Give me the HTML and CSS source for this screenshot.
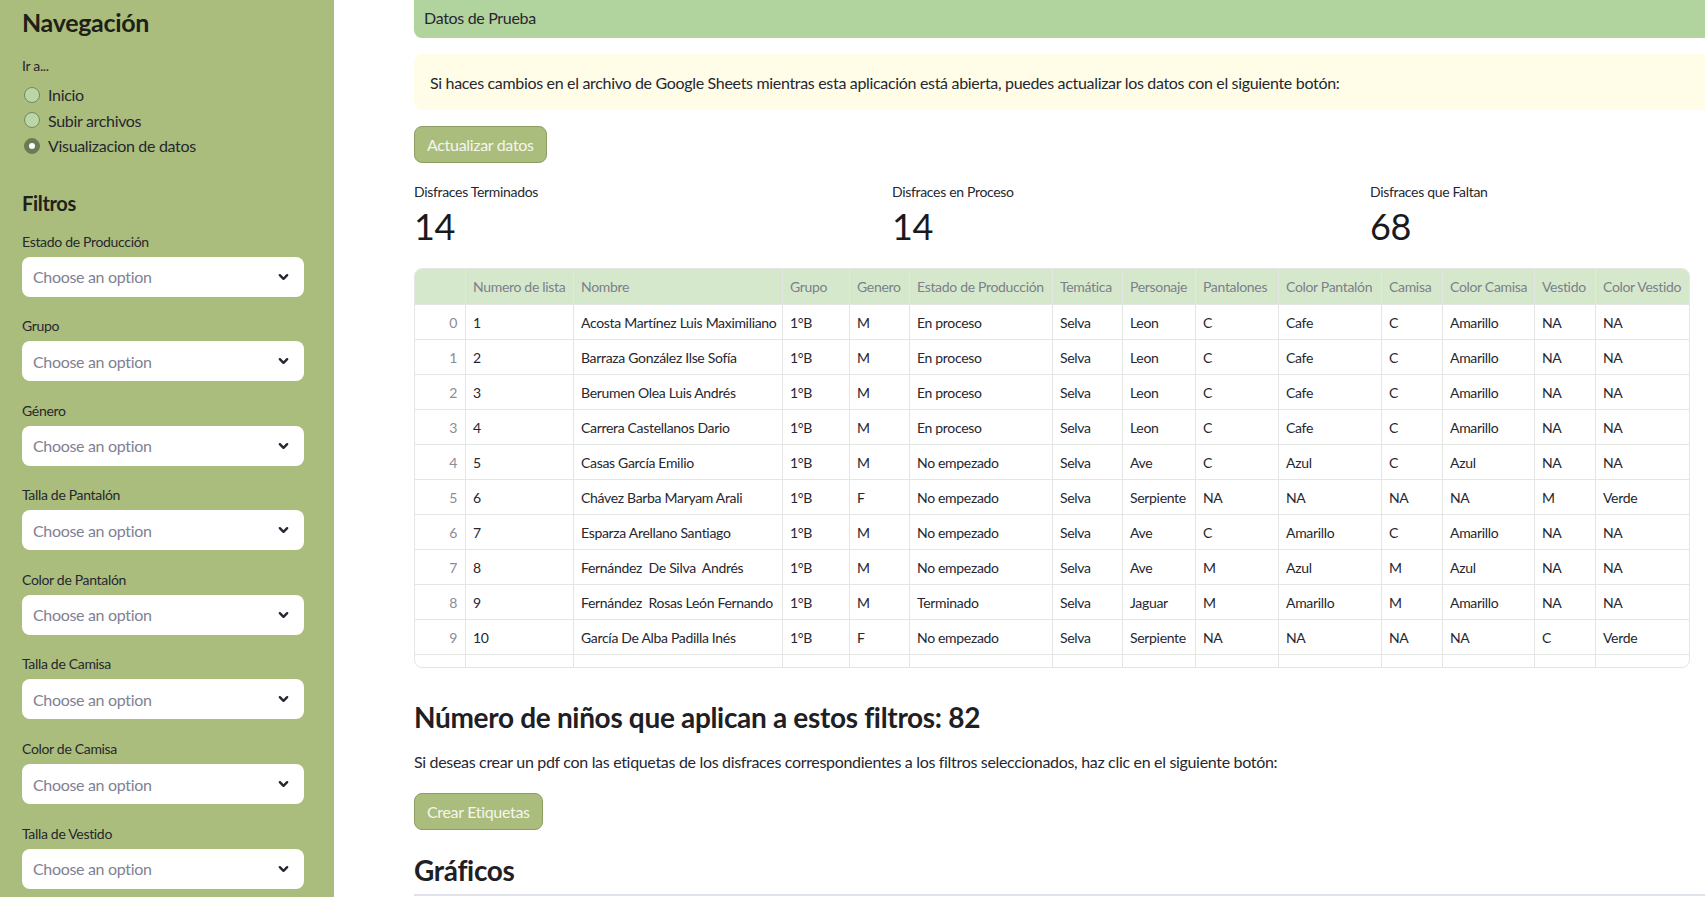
FILE: index.html
```html
<!DOCTYPE html>
<html lang="es">
<head>
<meta charset="utf-8">
<title>Visualizacion de datos</title>
<link rel="stylesheet" href="styles.css">
</head>
<body>
<div class="app">
  <aside class="sidebar">
    <h2 class="side-title">Navegación</h2>
    <div class="small-label">Ir a...</div>
    <div class="radios">
      <div class="radio"><span class="dot"></span><span>Inicio</span></div>
      <div class="radio"><span class="dot"></span><span>Subir archivos</span></div>
      <div class="radio checked"><span class="dot"></span><span>Visualizacion de datos</span></div>
    </div>
    <h3 class="side-sub">Filtros</h3>
    <div class="filters">
      <div class="filter"><div class="small-label">Estado de Producción</div><div class="select"><span>Choose an option</span><svg class="chev" viewBox="0 0 12 8"><path d="M2 2 L6 6 L10 2"/></svg></div></div>
      <div class="filter"><div class="small-label">Grupo</div><div class="select"><span>Choose an option</span><svg class="chev" viewBox="0 0 12 8"><path d="M2 2 L6 6 L10 2"/></svg></div></div>
      <div class="filter"><div class="small-label">Género</div><div class="select"><span>Choose an option</span><svg class="chev" viewBox="0 0 12 8"><path d="M2 2 L6 6 L10 2"/></svg></div></div>
      <div class="filter"><div class="small-label">Talla de Pantalón</div><div class="select"><span>Choose an option</span><svg class="chev" viewBox="0 0 12 8"><path d="M2 2 L6 6 L10 2"/></svg></div></div>
      <div class="filter"><div class="small-label">Color de Pantalón</div><div class="select"><span>Choose an option</span><svg class="chev" viewBox="0 0 12 8"><path d="M2 2 L6 6 L10 2"/></svg></div></div>
      <div class="filter"><div class="small-label">Talla de Camisa</div><div class="select"><span>Choose an option</span><svg class="chev" viewBox="0 0 12 8"><path d="M2 2 L6 6 L10 2"/></svg></div></div>
      <div class="filter"><div class="small-label">Color de Camisa</div><div class="select"><span>Choose an option</span><svg class="chev" viewBox="0 0 12 8"><path d="M2 2 L6 6 L10 2"/></svg></div></div>
      <div class="filter"><div class="small-label">Talla de Vestido</div><div class="select"><span>Choose an option</span><svg class="chev" viewBox="0 0 12 8"><path d="M2 2 L6 6 L10 2"/></svg></div></div>
    </div>
  </aside>

  <main class="main">
    <div class="content">
      <div class="banner">Datos de Prueba</div>
      <div class="info">Si haces cambios en el archivo de Google Sheets mientras esta aplicación está abierta, puedes actualizar los datos con el siguiente botón:</div>
      <button class="btn btn-update">Actualizar datos</button>

      <div class="metrics">
        <div class="metric"><div class="metric-label">Disfraces Terminados</div><div class="metric-value">14</div></div>
        <div class="metric"><div class="metric-label">Disfraces en Proceso</div><div class="metric-value">14</div></div>
        <div class="metric"><div class="metric-label">Disfraces que Faltan</div><div class="metric-value">68</div></div>
      </div>

      <div class="table-wrap">
        <table class="grid">
          <colgroup>
            <col class="c-idx"><col class="c-num"><col class="c-name"><col class="c-grp"><col class="c-gen"><col class="c-est"><col class="c-tem"><col class="c-per"><col class="c-pan"><col class="c-cpan"><col class="c-cam"><col class="c-ccam"><col class="c-ves"><col class="c-cves">
          </colgroup>
          <thead>
            <tr><th></th><th>Numero de lista</th><th>Nombre</th><th>Grupo</th><th>Genero</th><th>Estado de Producción</th><th>Temática</th><th>Personaje</th><th>Pantalones</th><th>Color Pantalón</th><th>Camisa</th><th>Color Camisa</th><th>Vestido</th><th>Color Vestido</th></tr>
          </thead>
          <tbody>
            <tr><td class="idx">0</td><td>1</td><td>Acosta Martínez Luis Maximiliano</td><td>1°B</td><td>M</td><td>En proceso</td><td>Selva</td><td>Leon</td><td>C</td><td>Cafe</td><td>C</td><td>Amarillo</td><td>NA</td><td>NA</td></tr>
            <tr><td class="idx">1</td><td>2</td><td>Barraza González Ilse Sofía</td><td>1°B</td><td>M</td><td>En proceso</td><td>Selva</td><td>Leon</td><td>C</td><td>Cafe</td><td>C</td><td>Amarillo</td><td>NA</td><td>NA</td></tr>
            <tr><td class="idx">2</td><td>3</td><td>Berumen Olea Luis Andrés</td><td>1°B</td><td>M</td><td>En proceso</td><td>Selva</td><td>Leon</td><td>C</td><td>Cafe</td><td>C</td><td>Amarillo</td><td>NA</td><td>NA</td></tr>
            <tr><td class="idx">3</td><td>4</td><td>Carrera Castellanos Dario</td><td>1°B</td><td>M</td><td>En proceso</td><td>Selva</td><td>Leon</td><td>C</td><td>Cafe</td><td>C</td><td>Amarillo</td><td>NA</td><td>NA</td></tr>
            <tr><td class="idx">4</td><td>5</td><td>Casas García Emilio</td><td>1°B</td><td>M</td><td>No empezado</td><td>Selva</td><td>Ave</td><td>C</td><td>Azul</td><td>C</td><td>Azul</td><td>NA</td><td>NA</td></tr>
            <tr><td class="idx">5</td><td>6</td><td>Chávez Barba Maryam Arali</td><td>1°B</td><td>F</td><td>No empezado</td><td>Selva</td><td>Serpiente</td><td>NA</td><td>NA</td><td>NA</td><td>NA</td><td>M</td><td>Verde</td></tr>
            <tr><td class="idx">6</td><td>7</td><td>Esparza Arellano Santiago</td><td>1°B</td><td>M</td><td>No empezado</td><td>Selva</td><td>Ave</td><td>C</td><td>Amarillo</td><td>C</td><td>Amarillo</td><td>NA</td><td>NA</td></tr>
            <tr><td class="idx">7</td><td>8</td><td>Fernández  De Silva  Andrés</td><td>1°B</td><td>M</td><td>No empezado</td><td>Selva</td><td>Ave</td><td>M</td><td>Azul</td><td>M</td><td>Azul</td><td>NA</td><td>NA</td></tr>
            <tr><td class="idx">8</td><td>9</td><td>Fernández  Rosas León Fernando</td><td>1°B</td><td>M</td><td>Terminado</td><td>Selva</td><td>Jaguar</td><td>M</td><td>Amarillo</td><td>M</td><td>Amarillo</td><td>NA</td><td>NA</td></tr>
            <tr><td class="idx">9</td><td>10</td><td>García De Alba Padilla Inés</td><td>1°B</td><td>F</td><td>No empezado</td><td>Selva</td><td>Serpiente</td><td>NA</td><td>NA</td><td>NA</td><td>NA</td><td>C</td><td>Verde</td></tr>
            <tr><td class="idx">10</td><td>11</td><td>Gómez Ramírez Sofía</td><td>1°B</td><td>F</td><td>No empezado</td><td>Selva</td><td>Serpiente</td><td>NA</td><td>NA</td><td>NA</td><td>NA</td><td>C</td><td>Verde</td></tr>
          </tbody>
        </table>
      </div>

      <h3 class="section-title count-title">Número de niños que aplican a estos filtros: 82</h3>
      <p class="para">Si deseas crear un pdf con las etiquetas de los disfraces correspondientes a los filtros seleccionados, haz clic en el siguiente botón:</p>
      <button class="btn btn-labels">Crear Etiquetas</button>
      <h3 class="section-title graf-title">Gráficos</h3>
      <div class="divider"></div>
    </div>
  </main>
</div>
</body>
</html>
```

FILE: styles.css
```css
* { box-sizing: border-box; }

html, body {
  margin: 0;
  padding: 0;
  height: 897px;
  overflow: hidden;
  background: #ffffff;
  font-family: "Lato", "Noto Sans", sans-serif;
  letter-spacing: -0.02em;
  color: #31333f;
}

.app {
  display: flex;
  height: 897px;
  overflow: hidden;
}

/* ---------- sidebar ---------- */
.sidebar {
  flex: 0 0 334px;
  width: 334px;
  height: 897px;
  background: #abbd7c;
  padding: 7px 30px 0 22px;
  overflow: hidden;
}

.side-title {
  margin: 0;
  font-size: 25px;
  font-weight: 700;
  line-height: 30px;
  color: #1f2118;
}

.small-label {
  font-size: 14px;
  line-height: 21px;
  color: #262730;
}

.sidebar > .small-label {
  margin-top: 18px;
}

.radios {
  display: flex;
  flex-direction: column;
  margin-top: 6px;
}

.radio {
  display: flex;
  align-items: center;
  gap: 8px;
  height: 25.5px;
  font-size: 16px;
  color: #262730;
  padding-left: 2px;
}

.radio .dot {
  width: 16px;
  height: 16px;
  border-radius: 50%;
  background: #bbd6a6;
  border: 1px solid #76865f;
  flex: 0 0 16px;
}

.radio.checked .dot {
  background: #6c7b54;
  border-color: #6c7b54;
  display: flex;
  align-items: center;
  justify-content: center;
}

.radio.checked .dot::after {
  content: "";
  width: 6px;
  height: 6px;
  border-radius: 50%;
  background: #ffffff;
}

.side-sub {
  margin: 31px 0 0 0;
  font-size: 20px;
  font-weight: 700;
  line-height: 26px;
  color: #1f2118;
}

.filters {
  display: flex;
  flex-direction: column;
  gap: 18.6px;
  margin-top: 15px;
}

.filter {
  display: flex;
  flex-direction: column;
  gap: 5px;
}

.select {
  height: 40px;
  width: 282px;
  background: #ffffff;
  border-radius: 8px;
  display: flex;
  align-items: center;
  justify-content: space-between;
  padding: 0 15px 0 11px;
  font-size: 16px;
  color: #7f8194;
}

.chev {
  width: 11px;
  height: 8px;
  fill: none;
  stroke: #262730;
  stroke-width: 2.6;
  stroke-linecap: round;
  stroke-linejoin: round;
}

/* ---------- main ---------- */
.main {
  flex: 1 1 auto;
  min-width: 0;
  overflow: hidden;
  padding-left: 80px;
}

.content {
  width: 1418px;
  display: flex;
  flex-direction: column;
  align-items: flex-start;
}

.banner {
  align-self: stretch;
  height: 38px;
  background: #b1d39d;
  border-radius: 0 0 8px 8px;
  padding: 0 10px 3px 10px;
  display: flex;
  align-items: center;
  font-size: 16px;
  color: #262730;
}

.info {
  align-self: stretch;
  margin-top: 16px;
  height: 56px;
  background: #fffde8;
  border-radius: 8px;
  padding: 0 16px;
  display: flex;
  align-items: center;
  font-size: 16px;
  color: #262730;
}

.btn {
  font-family: inherit;
  letter-spacing: inherit;
  font-size: 16px;
  color: #f4f6ee;
  background: #abbd7c;
  border: 1px solid #8c9e62;
  border-radius: 8px;
  height: 37px;
  padding: 0 12px;
  white-space: nowrap;
  cursor: pointer;
}

.btn-update {
  margin-top: 16px;
}

.metrics {
  align-self: stretch;
  display: grid;
  grid-template-columns: repeat(3, 1fr);
  gap: 16px;
  margin-top: 20px;
}

.metric-label {
  font-size: 14px;
  line-height: 18px;
  color: #262730;
}

.metric-value {
  font-size: 36px;
  line-height: 46px;
  color: #191a20;
  margin-top: 2px;
}

/* ---------- table ---------- */
.table-wrap {
  margin-top: 19px;
  width: 1276px;
  height: 400px;
  border: 1px solid #e4e6e3;
  border-radius: 8px;
  overflow: hidden;
}

.grid {
  border-collapse: collapse;
  table-layout: fixed;
  width: 1276px;
  margin: -1px 0 0 -1px;
  font-size: 14px;
}

.c-idx { width: 51px; }
.c-num { width: 108px; }
.c-name { width: 209px; }
.c-grp { width: 67px; }
.c-gen { width: 60px; }
.c-est { width: 143px; }
.c-tem { width: 70px; }
.c-per { width: 73px; }
.c-pan { width: 83px; }
.c-cpan { width: 103px; }
.c-cam { width: 61px; }
.c-ccam { width: 92px; }
.c-ves { width: 61px; }
.c-cves { width: 95px; }

.grid th,
.grid td {
  border: 1px solid #e4e6e3;
  padding: 0 6px 0 7px;
  text-align: left;
  white-space: pre;
  overflow: hidden;
}

.grid th {
  height: 36px;
  background: #d6e8cb;
  font-weight: 400;
  color: #7c7f8d;
}

.grid td {
  height: 35px;
  color: #262730;
}

.grid td.idx {
  text-align: right;
  color: #8a8c98;
  padding-right: 8px;
}

/* ---------- lower section ---------- */
.section-title {
  margin: 0;
  font-size: 28px;
  font-weight: 700;
  line-height: 36px;
  color: #1f2024;
}

.count-title {
  margin-top: 31px;
}

.para {
  margin: 15px 0 0 0;
  font-size: 16px;
  line-height: 24px;
  color: #262730;
}

.btn-labels {
  margin-top: 19px;
}

.graf-title {
  margin-top: 22px;
}

.divider {
  align-self: stretch;
  margin-top: 6px;
  height: 2px;
  background: #dfe3ec;
}
```
